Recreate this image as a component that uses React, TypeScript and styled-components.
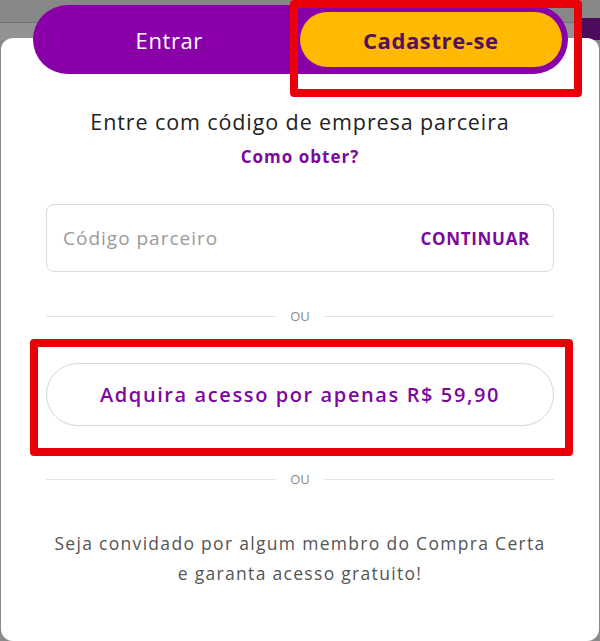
import React from 'react'
import styled, { createGlobalStyle } from 'styled-components'

const PURPLE = '#8a00a8'
const PURPLE_TEXT = '#7b0a9c'
const YELLOW = '#ffb900'
const LINE = '#e3e3e3'

const GlobalStyle = createGlobalStyle`
  html, body {
    margin: 0;
    padding: 0;
    height: 641px;
    overflow: hidden;
  }

  body {
    font-family: 'Open Sans', 'Noto Sans', sans-serif;
    background:
      linear-gradient(#4b0c5c, #4b0c5c) right 0 top 18px / 24px 22px no-repeat,
      linear-gradient(to bottom, #878787 0 22px, #737373 22px 23px, #929292 23px 40px, #8a8a8a 40px);
  }
`

const Page = styled.div`
  position: relative;
  height: 641px;
  padding-top: 38px;
  box-sizing: border-box;
`

const Card = styled.main`
  margin: 0 1px;
  height: 603px;
  background: #fff;
  border-radius: 12px;
  display: flex;
  flex-direction: column;
  align-items: center;
  padding: 0 45px;
  box-sizing: border-box;
`

const Tabs = styled.nav`
  margin-top: -33px;
  width: 535px;
  height: 69px;
  box-sizing: border-box;
  padding: 7px 6px;
  background: ${PURPLE};
  border-radius: 35px;
  display: grid;
  grid-template-columns: 1fr 1fr;
`

const Tab = styled.button<{ $active?: boolean }>`
  border: none;
  border-radius: 28px;
  font-family: inherit;
  font-size: 22px;
  letter-spacing: 0.6px;
  font-weight: ${p => (p.$active ? 700 : 500)};
  color: ${p => (p.$active ? '#50115f' : '#fff')};
  background: ${p => (p.$active ? YELLOW : 'transparent')};
  cursor: pointer;
`

const Heading = styled.p`
  margin: 35px 0 0;
  font-size: 21.5px;
  letter-spacing: 0.9px;
  line-height: 26px;
  color: #222;
  text-align: center;
`

const HowTo = styled.a`
  margin-top: 11px;
  font-size: 17px;
  letter-spacing: 1px;
  line-height: 22px;
  font-weight: 700;
  color: ${PURPLE_TEXT};
  text-decoration: none;
`

const CodeField = styled.div`
  margin-top: 36px;
  width: 100%;
  height: 68px;
  box-sizing: border-box;
  border: 1px solid #dcdcdc;
  border-radius: 8px;
  display: flex;
  align-items: center;
  padding: 0 23px 0 14px;
`

const CodeInput = styled.input`
  flex: 1;
  min-width: 0;
  border: none;
  outline: none;
  font-family: inherit;
  font-size: 19px;
  letter-spacing: 1px;
  color: #333;

  &::placeholder {
    color: #9a9a9a;
  }
`

const ContinueButton = styled.button`
  border: none;
  background: none;
  padding: 0;
  font-family: inherit;
  font-size: 17px;
  letter-spacing: 0.7px;
  font-weight: 700;
  color: ${PURPLE_TEXT};
  cursor: pointer;
`

const Divider = styled.div<{ $top: number }>`
  margin-top: ${p => p.$top}px;
  width: 100%;
  display: flex;
  align-items: center;
  gap: 14px;
  font-size: 13px;
  color: #8a8a8a;
  text-transform: uppercase;

  &::before,
  &::after {
    content: '';
    flex: 1;
    height: 1px;
    background: ${LINE};
  }
`

const BuyButton = styled.button`
  margin-top: 38px;
  width: 100%;
  height: 63px;
  border: 1px solid #d6d6d6;
  border-radius: 32px;
  background: #fff;
  font-family: inherit;
  font-size: 20px;
  letter-spacing: 1.6px;
  font-weight: 600;
  color: ${PURPLE_TEXT};
  cursor: pointer;
`

const Invite = styled.p`
  margin: 40px 0 0;
  font-size: 17.5px;
  letter-spacing: 1.3px;
  line-height: 30px;
  color: #555;
  text-align: center;
`

const Highlight = styled.div`
  position: absolute;
  border: 8px solid #ea0009;
  border-radius: 4px;
  box-sizing: border-box;
  pointer-events: none;
`

const App = () => (
  <>
    <GlobalStyle />
    <Page>
      <Card>
        <Tabs>
          <Tab>Entrar</Tab>
          <Tab $active>Cadastre-se</Tab>
        </Tabs>
        <Heading>Entre com código de empresa parceira</Heading>
        <HowTo href="#">Como obter?</HowTo>
        <CodeField>
          <CodeInput placeholder="Código parceiro" />
          <ContinueButton>CONTINUAR</ContinueButton>
        </CodeField>
        <Divider $top={35}>ou</Divider>
        <BuyButton>Adquira acesso por apenas R$ 59,90</BuyButton>
        <Divider $top={44}>ou</Divider>
        <Invite>
          Seja convidado por algum membro do Compra Certa
          <br />
          e garanta acesso gratuito!
        </Invite>
      </Card>
      <Highlight style={{ left: 290, top: 0, width: 292, height: 97 }} />
      <Highlight style={{ left: 30, top: 339, width: 543, height: 117 }} />
    </Page>
  </>
)

export default App
